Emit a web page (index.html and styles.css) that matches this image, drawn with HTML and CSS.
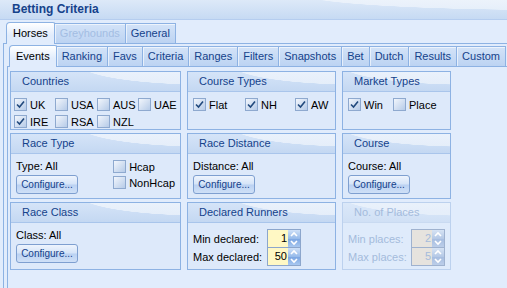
FILE: index.html
```html
<!DOCTYPE html>
<html lang="en">
<head>
    <meta charset="UTF-8">
    <title>Betting Criteria</title>
    <link rel="stylesheet" href="styles.css">
</head>
<body>
    <div class="window">
        <div class="caption">Betting Criteria</div>

        <div class="tabs outer-tabs">
            <div class="tab active">Horses</div>
            <div class="tab disabled">Greyhounds</div>
            <div class="tab">General</div>
        </div>

        <div class="page outer-page">
            <div class="tabs inner-tabs">
                <div class="tab active">Events</div>
                <div class="tab">Ranking</div>
                <div class="tab">Favs</div>
                <div class="tab">Criteria</div>
                <div class="tab">Ranges</div>
                <div class="tab">Filters</div>
                <div class="tab">Snapshots</div>
                <div class="tab">Bet</div>
                <div class="tab">Dutch</div>
                <div class="tab">Results</div>
                <div class="tab">Custom</div>
            </div>

            <div class="page inner-page">
                <div class="groups">
                    <!-- row 1 -->
                    <div class="group">
                        <div class="group-head">Countries</div>
                        <div class="group-body checks countries">
                            <label class="check"><span class="box on"></span>UK</label>
                            <label class="check"><span class="box"></span>USA</label>
                            <label class="check"><span class="box"></span>AUS</label>
                            <label class="check"><span class="box"></span>UAE</label>
                            <label class="check"><span class="box on"></span>IRE</label>
                            <label class="check"><span class="box"></span>RSA</label>
                            <label class="check"><span class="box"></span>NZL</label>
                        </div>
                    </div>
                    <div class="group">
                        <div class="group-head">Course Types</div>
                        <div class="group-body checks course-types">
                            <label class="check"><span class="box on"></span>Flat</label>
                            <label class="check"><span class="box on"></span>NH</label>
                            <label class="check"><span class="box on"></span>AW</label>
                        </div>
                    </div>
                    <div class="group">
                        <div class="group-head">Market Types</div>
                        <div class="group-body checks market-types">
                            <label class="check"><span class="box on"></span>Win</label>
                            <label class="check"><span class="box"></span>Place</label>
                        </div>
                    </div>

                    <!-- row 2 -->
                    <div class="group">
                        <div class="group-head">Race Type</div>
                        <div class="group-body race-type">
                            <div class="summary">
                                <div class="value">Type: All</div>
                                <button class="btn">Configure...</button>
                            </div>
                            <div class="stack">
                                <label class="check"><span class="box"></span>Hcap</label>
                                <label class="check"><span class="box"></span>NonHcap</label>
                            </div>
                        </div>
                    </div>
                    <div class="group">
                        <div class="group-head">Race Distance</div>
                        <div class="group-body">
                            <div class="value">Distance: All</div>
                            <button class="btn">Configure...</button>
                        </div>
                    </div>
                    <div class="group">
                        <div class="group-head">Course</div>
                        <div class="group-body">
                            <div class="value">Course: All</div>
                            <button class="btn">Configure...</button>
                        </div>
                    </div>

                    <!-- row 3 -->
                    <div class="group">
                        <div class="group-head">Race Class</div>
                        <div class="group-body">
                            <div class="value">Class: All</div>
                            <button class="btn">Configure...</button>
                        </div>
                    </div>
                    <div class="group">
                        <div class="group-head">Declared Runners</div>
                        <div class="group-body spins">
                            <div class="spin-row">
                                <span class="spin-label">Min declared:</span>
                                <div class="spin"><span class="spin-val">1</span><span class="spin-btn"><svg width="12" height="17" viewBox="0 0 12 17"><path d="M3 6 L6 3 L9 6" /><path d="M3 11 L6 14 L9 11" /></svg></span></div>
                            </div>
                            <div class="spin-row">
                                <span class="spin-label">Max declared:</span>
                                <div class="spin"><span class="spin-val">50</span><span class="spin-btn"><svg width="12" height="17" viewBox="0 0 12 17"><path d="M3 6 L6 3 L9 6" /><path d="M3 11 L6 14 L9 11" /></svg></span></div>
                            </div>
                        </div>
                    </div>
                    <div class="group disabled">
                        <div class="group-head">No. of Places</div>
                        <div class="group-body spins">
                            <div class="spin-row">
                                <span class="spin-label places">Min places:</span>
                                <div class="spin"><span class="spin-val">2</span><span class="spin-btn"><svg width="12" height="17" viewBox="0 0 12 17"><path d="M3 6 L6 3 L9 6" /><path d="M3 11 L6 14 L9 11" /></svg></span></div>
                            </div>
                            <div class="spin-row">
                                <span class="spin-label places">Max places:</span>
                                <div class="spin"><span class="spin-val">5</span><span class="spin-btn"><svg width="12" height="17" viewBox="0 0 12 17"><path d="M3 6 L6 3 L9 6" /><path d="M3 11 L6 14 L9 11" /></svg></span></div>
                            </div>
                        </div>
                    </div>
                </div>
            </div>
        </div>
    </div>
</body>
</html>
```

FILE: styles.css
```css
body {
    margin: 0;
    font-family: "Liberation Sans", Arial, sans-serif;
    font-size: 11px;
    color: #000;
    background: #e1ecfc;
}

.window {
    width: 507px;
    height: 288px;
    overflow: hidden;
}

/* caption bar */
.caption {
    height: 19px;
    line-height: 19px;
    padding-left: 12px;
    font-size: 12px;
    font-weight: bold;
    color: #15428b;
    background:
        radial-gradient(ellipse 420px 26px at 110% -30%, rgba(255,255,255,0.45) 60%, rgba(255,255,255,0) 61%),
        linear-gradient(#dde9f8, #c6daf3);
    border-bottom: 1px solid #b5cdef;
}

/* tabs */
.tabs {
    display: flex;
    align-items: flex-end;
    position: relative;
    z-index: 1;
}

.outer-tabs {
    height: 23px;
    padding-left: 6px;
}

.inner-tabs {
    height: 21px;
    padding-left: 5px;
}

.tab {
    height: 19px;
    line-height: 19px;
    padding: 0 5px;
    margin-right: -1px;
    color: #15428b;
    border: 1px solid #8db2e3;
    border-bottom: none;
    background: linear-gradient(#d3e3f8, #bcd3f2);
    box-shadow: inset 1px 1px 0 rgba(255,255,255,0.6);
}

.tab.active {
    height: 21px;
    line-height: 21px;
    margin-bottom: -1px;
    padding: 0 6px;
    border-radius: 4px 2px 0 0;
    background: linear-gradient(#ffffff, #e1ecfc 60%);
    color: #000;
    box-shadow: none;
}

.tab.disabled {
    color: #a3bde3;
}

/* tab pages */
.page {
    border-top: 1px solid #8db2e3;
    border-left: 1px solid #8db2e3;
    background: #e1ecfc;
}

.outer-page {
    margin-left: 3px;
    padding-top: 1px;
    height: 300px;
}

.inner-page {
    margin-left: 3px;
    padding: 4px 0 0 2px;
    height: 300px;
}

/* group boxes */
.groups {
    display: grid;
    grid-template-columns: 171px 149px 109px;
    grid-template-rows: 59px 66px 68px;
    column-gap: 6px;
    row-gap: 3px;
}

.group {
    border: 1px solid #8db2e3;
    background: #dde9fa;
}

.group-head {
    height: 19px;
    line-height: 19px;
    padding-left: 11px;
    color: #15428b;
    border-bottom: 1px solid #a9c5eb;
    background:
        radial-gradient(ellipse 180px 30px at 115% -45%, rgba(255,255,255,0.5) 70%, rgba(255,255,255,0) 71%),
        linear-gradient(#d5e4f8, #c4d8f2);
}

.group-body {
    padding: 4px 5px 0;
}

.checks {
    display: grid;
    row-gap: 4px;
    padding-top: 6px;
}

.countries {
    grid-template-columns: 41px 42px 41px auto;
    padding-left: 3px;
}

.course-types {
    grid-template-columns: 52px 50px auto;
}

.market-types {
    grid-template-columns: 45px auto;
}

.check {
    display: flex;
    align-items: center;
    gap: 3px;
    height: 13px;
    white-space: nowrap;
}

.box {
    width: 11px;
    height: 11px;
    border: 1px solid #8ea9cf;
    background: linear-gradient(135deg, #f2f6fc, #b6cbe8);
    display: flex;
    align-items: center;
    justify-content: center;
}

.box.on {
    background:
        url("data:image/svg+xml,%3Csvg xmlns='http://www.w3.org/2000/svg' width='11' height='11'%3E%3Cpath d='M2 5.5 L4.5 8 L9 2.5' fill='none' stroke='%2321497d' stroke-width='1.6'/%3E%3C/svg%3E") center no-repeat,
        linear-gradient(135deg, #f2f6fc, #b6cbe8);
}

.value {
    height: 14px;
    line-height: 14px;
    padding-top: 1px;
}

.btn {
    display: block;
    margin-top: 2px;
    height: 19px;
    width: 62px;
    padding: 0;
    font-family: inherit;
    font-size: 10px;
    color: #15428b;
    border: 1px solid #7e9fd0;
    border-radius: 3px;
    background: linear-gradient(#eef4fd, #d5e4f8 48%, #bad1f2 52%, #cfe0f7);
}

.race-type {
    display: flex;
}

.summary {
    width: 102px;
}

.stack {
    display: flex;
    flex-direction: column;
    gap: 3px;
    padding-top: 2px;
}

/* spin edits */
.spins {
    padding-top: 6px;
}

.spin-row {
    display: flex;
    align-items: center;
}

.spin-row + .spin-row {
    margin-top: -1px;
}

.spin-label {
    width: 74px;
}

.spin-label.places {
    width: 63px;
}

.spin {
    display: flex;
    width: 32px;
    height: 17px;
    border: 1px solid #8ca6cc;
    background: #fff8c4;
}

.spin-val {
    flex: 1;
    text-align: right;
    line-height: 17px;
    padding-right: 1px;
}

.spin-btn {
    width: 12px;
    background: linear-gradient(#cfe1f8, #97bbea 50%, #7aa5e2 52%, #a9c8f0);
}

.spin-btn svg path {
    fill: none;
    stroke: #fff;
    stroke-width: 1.6;
}

/* disabled group */
.group.disabled {
    border-color: #bcd1ee;
    background: #dfebfb;
    color: #a4bbdc;
}

.group.disabled .group-head {
    color: #a4bbdc;
    border-bottom-color: #c9daf1;
    background:
        radial-gradient(ellipse 180px 30px at 115% -45%, rgba(255,255,255,0.4) 70%, rgba(255,255,255,0) 71%),
        linear-gradient(#dbe8f9, #d0e0f5);
}

.group.disabled .spin {
    background: #e6e3de;
    border-color: #9fb2cf;
}

.group.disabled .spin-btn {
    background: linear-gradient(#d6e3f4, #b5c9e6 50%, #a6bde0 52%, #bccee9);
}
```
